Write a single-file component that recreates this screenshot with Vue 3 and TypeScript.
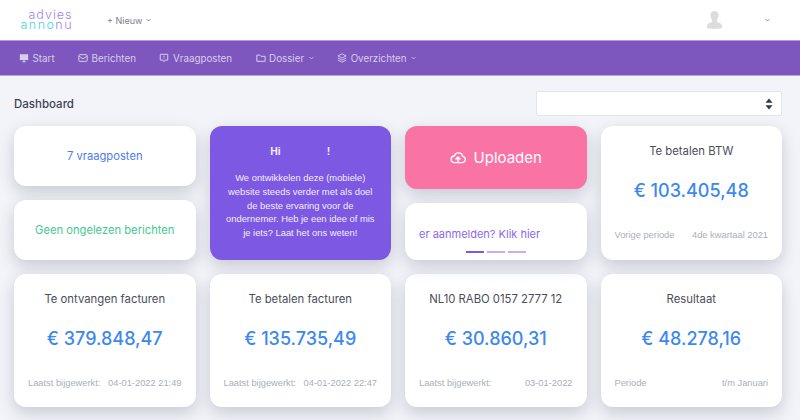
<template>
  <div class="page">
    <header class="topbar">
      <svg class="logo" width="52" height="24" viewBox="0 0 52 24">
        <text x="8.500" y="11" textLength="43" class="logo-top">advies</text>
        <text x="0.500" y="21" textLength="51" class="logo-bottom">anno<tspan class="logo-nu">nu</tspan></text>
      </svg>
      <span class="new-btn">+ Nieuw <Chevron class="chev" /></span>
      <div class="user">
        <svg class="avatar" width="15" height="18" viewBox="0 0 16 20" preserveAspectRatio="none">
          <path d="M8 0c2.800 0 4.300 2 4.300 4.800 0 2-.8 3.900-1.900 5v1.600c0 .9 1.500 1.300 3 1.900 1.500.6 2.600 1.400 2.600 3.700V19c-2 .7-5 1-8 1s-6-.3-8-1v-2c0-2.300 1.100-3.100 2.600-3.700 1.500-.6 3-1 3-1.900V9.800C4.500 8.700 3.700 6.800 3.700 4.800 3.700 2 5.200 0 8 0z" fill="#dcdcdc" />
        </svg>
        <Chevron class="chev user-chev" />
      </div>
    </header>

    <nav class="navbar">
      <a v-for="item in navItems" :key="item.label" class="nav-item">
        <svg width="10" height="10" viewBox="0 0 24 24" class="nav-icon" v-html="item.icon"></svg>
        {{ item.label }}
        <Chevron v-if="item.dropdown" class="chev nav-chev" />
      </a>
    </nav>

    <main class="content">
      <div class="title-row">
        <h1>Dashboard</h1>
        <div class="select">
          <svg width="8" height="12" viewBox="0 0 8 12"><path d="M4 0.500L7.500 4.800H0.500zM4 11.500L0.500 7.200H7.500z" fill="#343a40" /></svg>
        </div>
      </div>

      <div class="grid">
        <div class="stack">
          <div class="card link-card blue">7 vraagposten</div>
          <div class="card link-card green">Geen ongelezen berichten</div>
        </div>

        <div class="card welcome">
          <div class="hi"><span>Hi</span><span>!</span></div>
          <p>We ontwikkelen deze (mobiele) website steeds verder met als doel de beste ervaring voor de ondernemer. Heb je een idee of mis je iets? Laat het ons weten!</p>
        </div>

        <div class="stack upload-stack">
          <div class="card upload">
            <svg width="16" height="16" viewBox="0 0 24 24" fill="none" stroke="#fff" stroke-width="2" stroke-linecap="round" stroke-linejoin="round">
              <path d="M7 19a5 5 0 0 1-.6-10A6.500 6.500 0 0 1 19 9.500a4.800 4.800 0 0 1-1 9.500z" />
              <path d="M12 17v-6M9 13.500L12 10.500l3 3" stroke-width="2.400" />
            </svg>
            Uploaden
          </div>
          <div class="card carousel">
            <span class="carousel-text">er aanmelden? Klik hier</span>
            <div class="dots"><i class="on"></i><i></i><i></i></div>
          </div>
        </div>

        <div v-for="stat in stats" :key="stat.title" class="card stat">
          <div class="stat-title">{{ stat.title }}</div>
          <div class="stat-value">{{ stat.value }}</div>
          <div class="stat-foot"><span>{{ stat.left }}</span><span>{{ stat.right }}</span></div>
        </div>
      </div>
    </main>
  </div>
</template>

<script setup lang="ts">
import { h } from 'vue'

const Chevron = () =>
  h('svg', { width: 5, height: 4, viewBox: '0 0 8 5', fill: 'none', stroke: 'currentColor', 'stroke-width': 1.300 }, [
    h('path', { d: 'M1 1l3 3 3-3' }),
  ])

const navItems = [
  { label: 'Start', icon: '<path d="M2 3h20v14H2z" fill="currentColor"/><path d="M8 21h8M12 17v4" stroke="currentColor" stroke-width="2.500"/>' },
  { label: 'Berichten', icon: '<rect x="2" y="4" width="20" height="16" rx="2" fill="none" stroke="currentColor" stroke-width="2.400"/><path d="M3 8l9 6 9-6" fill="none" stroke="currentColor" stroke-width="2.400"/>' },
  { label: 'Vraagposten', icon: '<path d="M3 3h18v14h-6l-3 4-3-4H3z" fill="none" stroke="currentColor" stroke-width="2.400"/><path d="M12 6v5M12 13v2" stroke="currentColor" stroke-width="2.200"/>' },
  { label: 'Dossier', dropdown: true, icon: '<path d="M2 5h7l3 3h10v12H2z" fill="none" stroke="currentColor" stroke-width="2.400"/>' },
  { label: 'Overzichten', dropdown: true, icon: '<path d="M12 2l10 5-10 5L2 7z" fill="none" stroke="currentColor" stroke-width="2.200"/><path d="M2 12l10 5 10-5M2 17l10 5 10-5" fill="none" stroke="currentColor" stroke-width="2.200"/>' },
]

const stats = [
  { title: 'Te betalen BTW', value: '€ 103.405,48', left: 'Vorige periode', right: '4de kwartaal 2021' },
  { title: 'Te ontvangen facturen', value: '€ 379.848,47', left: 'Laatst bijgewerkt:', right: '04-01-2022 21:49' },
  { title: 'Te betalen facturen', value: '€ 135.735,49', left: 'Laatst bijgewerkt:', right: '04-01-2022 22:47' },
  { title: 'NL10 RABO 0157 2777 12', value: '€ 30.860,31', left: 'Laatst bijgewerkt:', right: '03-01-2022' },
  { title: 'Resultaat', value: '€ 48.278,16', left: 'Periode', right: 't/m Januari' },
]
</script>

<style scoped>
.page {
  height: 420px;
  overflow: hidden;
  background: #f3f4f9;
  font-family: Inter, "Noto Sans", sans-serif;
  color: #3f4254;
}

.topbar {
  height: 40px;
  display: flex;
  align-items: center;
  background: #fff;
  padding: 0 20px;
}

.logo {
  flex: none;
  overflow: visible;
  font-family: Inter, sans-serif;
  font-size: 12.500px;
  font-weight: 300;
}

.logo-top {
  fill: #a283ee;
}

.logo-bottom {
  fill: #3fd4e6;
}

.logo-nu {
  fill: #a283ee;
}

.new-btn {
  margin-left: 35px;
  font-size: 9px;
  color: #7b7f8c;
  display: flex;
  align-items: center;
  gap: 4px;
}

.user {
  margin-left: auto;
  display: flex;
  align-items: center;
  gap: 43px;
  padding-right: 10px;
}

.user-chev {
  color: #777;
}

.navbar {
  height: 36px;
  box-sizing: border-box;
  display: flex;
  align-items: center;
  gap: 23.500px;
  padding: 0 19px;
  background: #7e57be;
  border-top: 1px solid #b39ddb;
  border-bottom: 1px solid #b9a6d9;
}

.nav-item {
  display: flex;
  align-items: center;
  gap: 3.500px;
  color: #d8cdec;
  font-size: 9.800px;
}

.nav-icon {
  flex: none;
}

.nav-chev {
  margin-left: 1px;
}

.content {
  padding: 15px 18px 0 14px;
}

.title-row {
  height: 25px;
  display: flex;
  align-items: center;
  justify-content: space-between;
  margin-bottom: 10px;
}

.title-row h1 {
  margin: 0;
  font-size: 11.500px;
  font-weight: 500;
  color: #3f4254;
}

.select {
  width: 246px;
  height: 25px;
  box-sizing: border-box;
  display: flex;
  align-items: center;
  justify-content: flex-end;
  padding-right: 8px;
  background: #fff;
  border: 1px solid #e2e5ec;
  border-radius: 2px;
}

.grid {
  display: grid;
  grid-template-columns: repeat(4, 1fr);
  grid-auto-rows: 133.500px;
  gap: 14px;
}

.card {
  background: #fff;
  border-radius: 12px;
  box-shadow: 0 6px 16px rgba(50, 55, 80, 0.22);
}

.stack {
  display: flex;
  flex-direction: column;
  gap: 14px;
}

.link-card {
  flex: 1;
  display: flex;
  align-items: center;
  justify-content: center;
  font-size: 11.200px;
}

.blue {
  color: #4f7bef;
}

.green {
  color: #45c993;
}

.welcome {
  box-sizing: border-box;
  background: #7d58e2;
  color: #f2eeff;
  text-align: center;
  padding: 19px 14px 0;
  font-family: "Liberation Sans", Arial, sans-serif;
}

.hi {
  display: flex;
  justify-content: center;
  gap: 46px;
  font-size: 10.500px;
  font-weight: 700;
}

.welcome p {
  margin: 14px 0 0;
  font-size: 9.400px;
  line-height: 13.800px;
}

.upload-stack .upload {
  height: 63px;
  display: flex;
  align-items: center;
  justify-content: center;
  gap: 8px;
  background: #fa73a5;
  color: #fff;
  font-size: 15px;
}

.carousel {
  flex: 1;
  position: relative;
  overflow: hidden;
}

.carousel-text {
  position: absolute;
  left: 14px;
  top: 24px;
  white-space: nowrap;
  font-size: 11px;
  color: #8a68ea;
}

.dots {
  position: absolute;
  left: 61px;
  bottom: 7px;
  display: flex;
  gap: 3px;
}

.dots i {
  width: 18px;
  height: 1.500px;
  background: #c3b0f2;
}

.dots i.on {
  background: #7d58e2;
}

.stat {
  display: flex;
  flex-direction: column;
  align-items: center;
  box-sizing: border-box;
  padding: 18px 14px 0;
}

.stat-title {
  font-size: 11.300px;
  color: #4a4d5a;
  white-space: nowrap;
}

.stat-value {
  margin-top: 22px;
  font-size: 18px;
  font-weight: 500;
  color: #3d88f0;
  white-space: nowrap;
}

.stat-foot {
  margin-top: 29px;
  width: 100%;
  display: flex;
  justify-content: space-between;
  font-family: "Liberation Sans", Arial, sans-serif;
  font-size: 9.300px;
  color: #a9b0b9;
  white-space: nowrap;
}
</style>
